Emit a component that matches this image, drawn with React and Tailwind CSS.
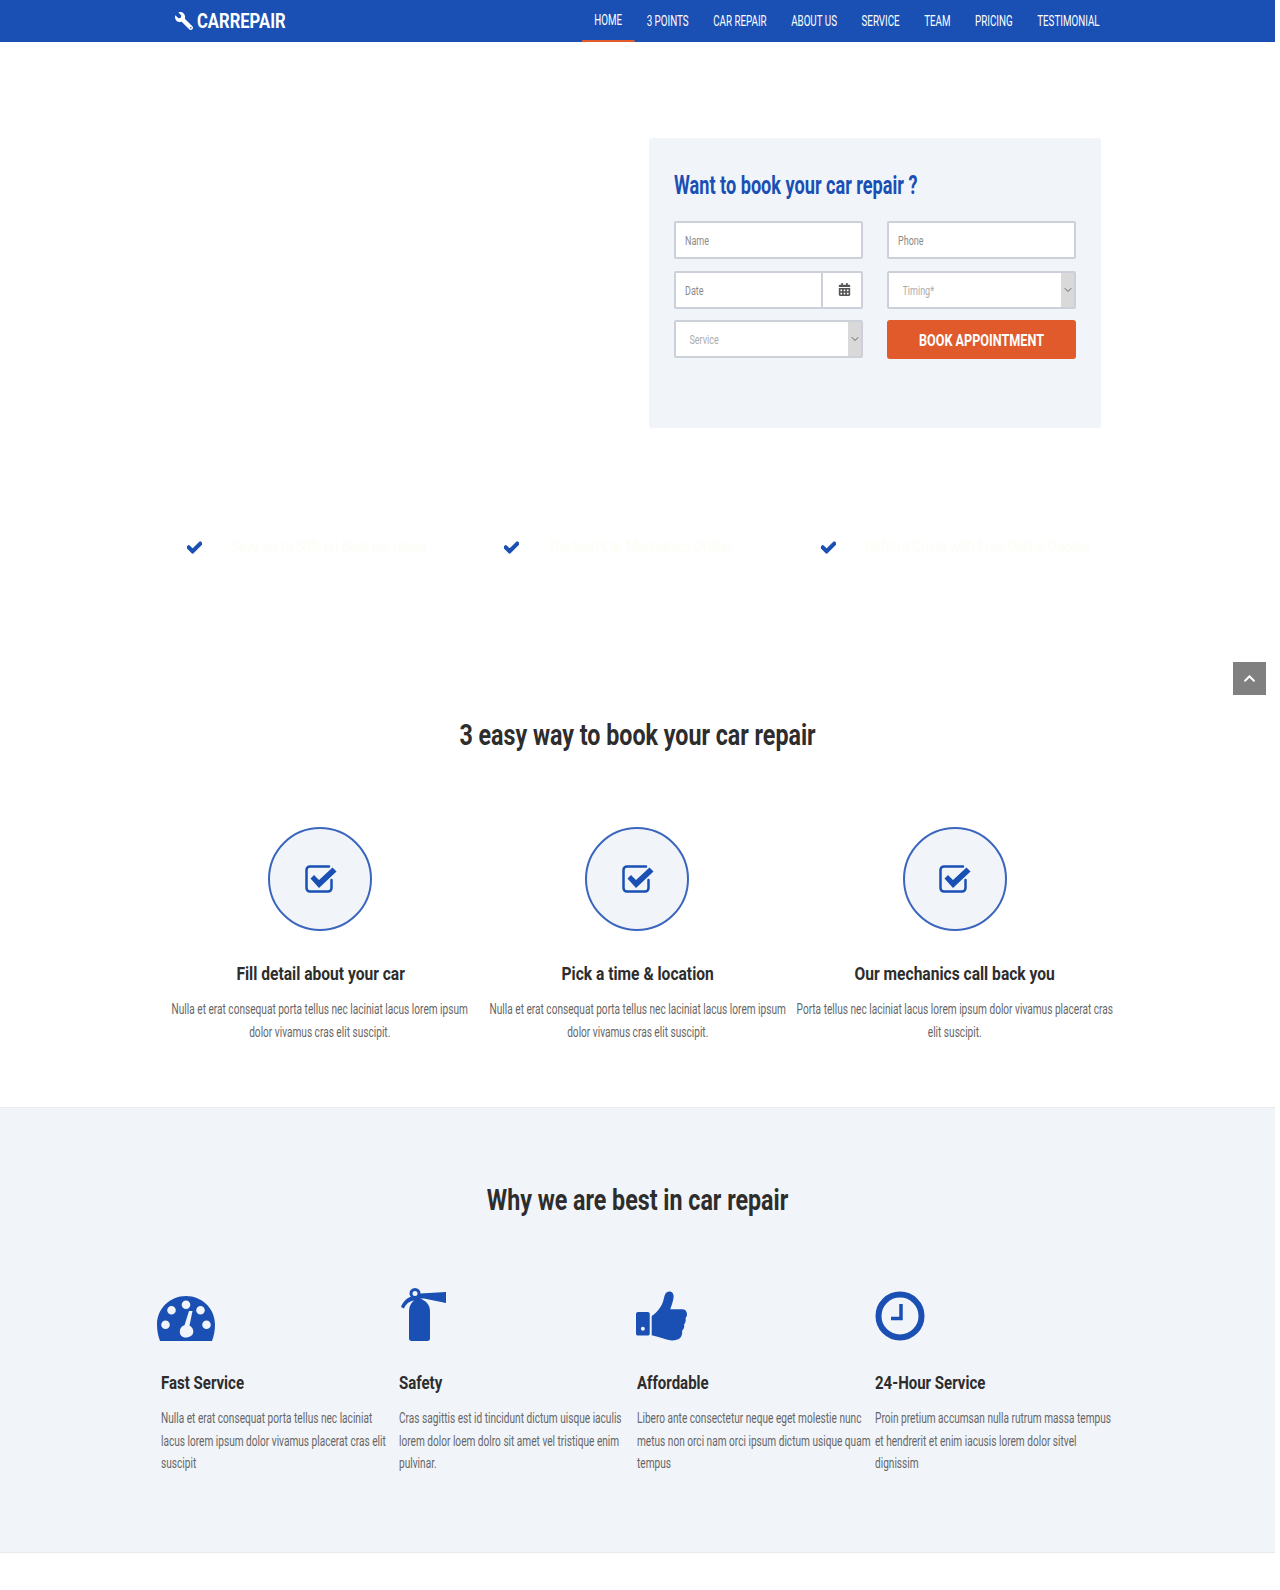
import { FaWrench, FaCheck, FaCalendarAlt, FaChevronUp } from 'react-icons/fa';
import { ChevronDown } from 'lucide-react';

const navItems = ['HOME', '3 POINTS', 'CAR REPAIR', 'ABOUT US', 'SERVICE', 'TEAM', 'PRICING', 'TESTIMONIAL'];

const perks = ['Save up to 50% on Best car repair', 'The best Car Mechanics Online', 'Upfront Costs with Free Online Quotes'];

const steps = [
  { title: 'Fill detail about your car', text: 'Nulla et erat consequat porta tellus nec laciniat lacus lorem ipsum dolor vivamus cras elit suscipit.' },
  { title: 'Pick a time & location', text: 'Nulla et erat consequat porta tellus nec laciniat lacus lorem ipsum dolor vivamus cras elit suscipit.' },
  { title: 'Our mechanics call back you', text: 'Porta tellus nec laciniat lacus lorem ipsum dolor vivamus placerat cras elit suscipit.' },
];

function CheckBoxIcon() {
  return (
    <svg width="32" height="28" viewBox="0 0 32 28" className="ml-[1px] text-[#1a4fb4]">
      <path d="M24 1.500H5C3 1.500 1.500 3 1.500 5V23C1.500 25 3 26.500 5 26.500H23C25 26.500 26.500 25 26.500 23V15" fill="none" stroke="currentColor" strokeWidth="2.500" strokeLinecap="round" />
      <path d="M5.500 13.500L9 10L14 15L27.500 2.500L31.500 6.500L14 23Z" fill="currentColor" strokeLinejoin="round" />
    </svg>
  );
}

function GaugeIcon() {
  return (
    <svg width="58" height="46" viewBox="0 -1 58 46" className="-ml-[4px] text-[#1a4fb4]" fill="currentColor">
      <path fillRule="evenodd" d="M29 0C13 0 0 12.500 0 28.500C0 34 1 40 3 45H55C57 40 58 34 58 28.500C58 12.500 45 0 29 0ZM29 4.500A4.300 4.300 0 1 1 29 13.100A4.300 4.300 0 0 1 29 4.500ZM14.500 10A4.300 4.300 0 1 1 14.500 18.600A4.300 4.300 0 0 1 14.500 10ZM43.500 10A4.300 4.300 0 1 1 43.500 18.600A4.300 4.300 0 0 1 43.500 10ZM8.500 24.500A4.300 4.300 0 1 1 8.500 33.100A4.300 4.300 0 0 1 8.500 24.500ZM49.500 24.500A4.300 4.300 0 1 1 49.500 33.100A4.300 4.300 0 0 1 49.500 24.500ZM35.500 15L32.500 29.500C35 31 36.300 33 36.300 35.500C36.300 39 33.300 41.500 28.500 41.500C25 41.500 22.800 39 22.800 35.500C22.800 32.500 24.800 30 27.500 29.300L32 15Z" />
    </svg>
  );
}

function ExtinguisherIcon() {
  return (
    <svg width="46" height="53" viewBox="0 0 46 53" className="ml-[2px] text-[#1a4fb4]" fill="currentColor">
      <path fillRule="evenodd" d="M14 0A5.500 5.500 0 0 1 19.500 5.500L45 4V15L23 10.500L19 10.500C24.500 12.500 29 16.500 29 23V50.500C29 52 28 53 26.500 53H10.500C9 53 8 52 8 50.500V23C8 18.500 10 15 13 12.500C9 13 5 15.500 3 20.500L0 19C2 13.500 6 10 10 8.500C9 7.800 8.500 6.800 8.500 5.500A5.500 5.500 0 0 1 14 0ZM14 3A2.500 2.500 0 1 0 14 8A2.500 2.500 0 0 0 14 3Z" />
    </svg>
  );
}

function ThumbIcon() {
  return (
    <svg width="51" height="50" viewBox="0 0 52 50" className="-ml-[1px] text-[#1a4fb4]" fill="currentColor">
      <path fillRule="evenodd" d="M2 21H12C13 21 14 22 14 23V43C14 44 13 45 12 45H2C1 45 0 44 0 43V23C0 22 1 21 2 21ZM7 36A2 2 0 1 0 7 40A2 2 0 0 0 7 36Z" />
      <path d="M16 25C21 22 26 16 28 9C29 4 30 0 34 0C38 0 39 4 38 8C37.500 11 36 15 35 18H47C50 18 52 20 52 23C52 25 51.500 26 50.500 27C51 30 50.500 32 49 33.500C49.500 36 49 38 47 40C47.500 44 46 48 42 49C38 50.500 33 50 28 48C24 46.500 20 45.500 16 44.500Z" />
    </svg>
  );
}

function ClockIcon() {
  return (
    <svg width="50" height="50" viewBox="0 0 50 50" className="text-[#1a4fb4]" fill="none" stroke="currentColor">
      <circle cx="25" cy="25" r="21.500" strokeWidth="6" />
      <path d="M26 13V27.500H16" strokeWidth="3.500" />
    </svg>
  );
}

const features = [
  { icon: <GaugeIcon />, title: 'Fast Service', text: 'Nulla et erat consequat porta tellus nec laciniat lacus lorem ipsum dolor vivamus placerat cras elit suscipit' },
  { icon: <ExtinguisherIcon />, title: 'Safety', text: 'Cras sagittis est id tincidunt dictum uisque iaculis lorem dolor loem dolro sit amet vel tristique enim pulvinar.' },
  { icon: <ThumbIcon />, title: 'Affordable', text: 'Libero ante consectetur neque eget molestie nunc metus non orci nam orci ipsum dictum usique quam tempus' },
  { icon: <ClockIcon />, title: '24-Hour Service', text: 'Proin pretium accumsan nulla rutrum massa tempus et hendrerit et enim iacusis lorem dolor sitvel dignissim' },
];

const boxClass = 'h-[38px] overflow-hidden rounded-[2px] border-2 border-[#ccd1d9] bg-white';
// no condensed face is installed, so the text is squeezed horizontally
const fieldClass = 'h-full w-[134%] origin-left scale-x-[.75] bg-transparent pt-[2px] text-[12px] outline-none placeholder:text-[#8a8a8a]';

function SelectField({ label }) {
  return (
    <div className={`relative ${boxClass}`}>
      <select defaultValue="" className={`${fieldClass} appearance-none pl-[18px] text-[#ababab]`}>
        <option value="">{label}</option>
      </select>
      <span className="absolute inset-y-0 right-0 flex w-[13px] items-center justify-center bg-[#d9d9d9] text-[#555]">
        <ChevronDown size={12} strokeWidth={1.75} />
      </span>
    </div>
  );
}

export default function App() {
  return (
    <div className="relative h-[1590px] w-[1275px] bg-white font-['Roboto',sans-serif] text-[#2d2d2d]">
      <header className="flex h-[42px] items-center bg-[#1a4fb4] pl-[175px] pr-[163px] text-white">
        <a className="flex items-center gap-[4px]">
          <FaWrench size={18} className="-scale-x-100" />
          <span className="origin-left scale-x-[.83] text-[20px] font-bold">CARREPAIR</span>
        </a>
        <nav className="ml-auto flex h-full origin-right scale-x-[.7]">
          {navItems.map((item, i) => (
            <a
              key={item}
              className={`flex h-full items-center px-[17.500px] text-[14px] ${i === 0 ? 'border-b-2 border-[#e05a2b]' : ''}`}
            >
              {item}
            </a>
          ))}
        </nav>
      </header>

      <section className="flex justify-end pr-[174px] pt-[96px]">
        <form className="h-[290px] w-[452px] rounded-[3px] bg-[#f1f4f9] px-[25px] pt-[33px]">
          <h3 className="origin-left scale-x-[.725] whitespace-nowrap text-[25px] font-bold leading-[30px] text-[#1a4fb4]">
            Want to book your car repair ?
          </h3>
          <div className="mt-[20px] grid grid-cols-2 gap-x-[24px] gap-y-[11.5px]">
            <div className={boxClass}><input placeholder="Name" className={`${fieldClass} pl-[12px]`} /></div>
            <div className={boxClass}><input placeholder="Phone" className={`${fieldClass} pl-[12px]`} /></div>
            <div className={`flex ${boxClass}`}>
              <div className="min-w-0 flex-1 overflow-hidden">
                <input placeholder="Date" className={`${fieldClass} pl-[12px]`} />
              </div>
              <span className="flex w-[40px] shrink-0 items-center justify-center border-l-2 border-[#ccd1d9] pl-[5px] text-[#555]">
                <FaCalendarAlt size={13} />
              </span>
            </div>
            <SelectField label="Timing*" />
            <SelectField label="Service" />
            <button type="button" className="h-[39px] rounded-[3px] bg-[#e05a2b] pt-[3px] text-white">
              <span className="block scale-x-[.765] whitespace-nowrap text-[16.5px] font-bold">BOOK APPOINTMENT</span>
            </button>
          </div>
        </form>
      </section>

      <section className="ml-[187px] mt-[110px] grid w-[951px] grid-cols-3">
        {perks.map((perk) => (
          <div key={perk} className="flex h-[18px] items-center gap-[29px]">
            <FaCheck size={15} stroke="currentColor" strokeWidth={40} className="shrink-0 text-[#1a4fb4]" />
            <span className="origin-left scale-x-[.83] whitespace-nowrap text-[16px] text-[#fdfdf6]">{perk}</span>
          </div>
        ))}
      </section>

      <section className="mt-[161px]">
        <h2 className="scale-x-[.775] text-center text-[30px] font-bold leading-[36px]">3 easy way to book your car repair</h2>
        <div className="mx-[161.500px] mt-[74px] grid grid-cols-3">
          {steps.map((step) => (
            <div key={step.title} className="text-center">
              <div className="mx-auto flex h-[104px] w-[104px] items-center justify-center rounded-full border-2 border-[#3b66bd] bg-[#f1f4f9]">
                <CheckBoxIcon />
              </div>
              <h4 className="mt-[31px] scale-x-[.82] text-[19px] font-bold leading-[24px]">{step.title}</h4>
              <p className="-mx-[19.250%] mt-[12px] w-[138.500%] scale-x-[.722] text-[14px] leading-[22.500px] text-[#666]">{step.text}</p>
            </div>
          ))}
        </div>
      </section>

      <section className="mt-[64px] h-[446px] border-y border-[#e6e9ee] bg-[#f1f4f9] pt-[74px]">
        <h2 className="scale-x-[.775] text-center text-[30px] font-bold leading-[36px]">Why we are best in car repair</h2>
        <div className="ml-[161px] mt-[70px] grid w-[952px] grid-cols-4">
          {features.map((feature) => (
            <div key={feature.title} className="pr-[1px]">
              <div className="flex h-[53px] items-end">{feature.icon}</div>
              <h4 className="mt-[30px] origin-left scale-x-[.79] text-[19px] font-bold leading-[24px]">{feature.title}</h4>
              <p className="mt-[12px] w-[138.500%] origin-left scale-x-[.722] text-[14px] leading-[22.500px] text-[#666]">{feature.text}</p>
            </div>
          ))}
        </div>
      </section>

      <button type="button" className="absolute left-[1233px] top-[662px] flex h-[33px] w-[33px] items-center justify-center bg-[#808080] text-white">
        <FaChevronUp size={13} />
      </button>
    </div>
  );
}
